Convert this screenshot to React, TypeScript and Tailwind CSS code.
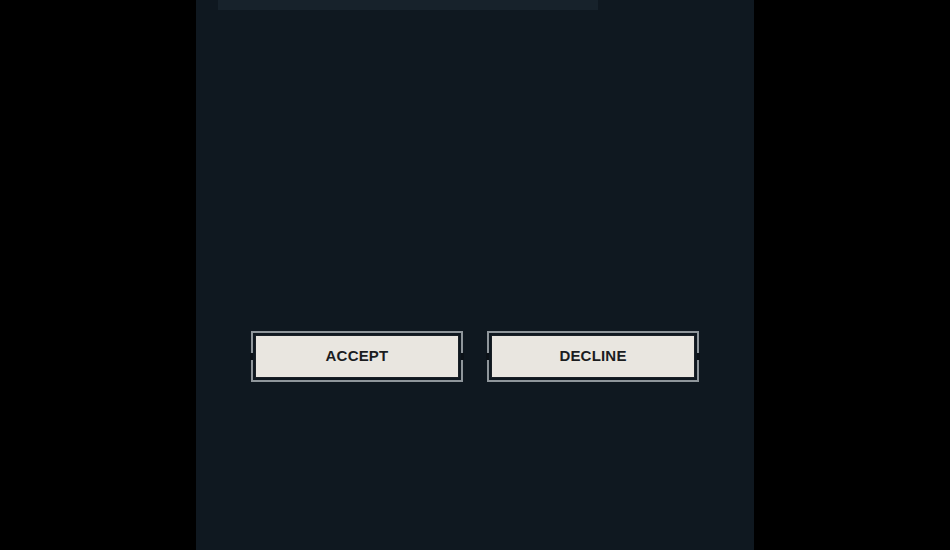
function FrameButton({ label }: { label: string }) {
  return (
    <button className="relative w-[212px] h-[51px] border-2 border-[#8f969b] bg-[#0f1820] p-[2px]">
      <span className="absolute left-[-3px] top-[20px] w-[3px] h-[7px] bg-[#0c1218]" />
      <span className="absolute right-[-3px] top-[20px] w-[3px] h-[7px] bg-[#0c1218]" />
      <span className="flex h-full w-full items-center justify-center border border-[#1a2026] bg-[#e9e6e0] text-[15px] font-bold tracking-[0.2px] text-[#1b1d1f] [font-family:'Liberation_Sans',Arial,sans-serif]">
        {label}
      </span>
    </button>
  );
}

export default function App() {
  return (
    <div className="flex h-[550px] w-[950px] justify-center bg-black">
      <div className="flex h-full w-[558px] flex-col bg-[#0f1820]">
        <div className="ml-[22px] h-[10px] w-[380px] bg-[#17222b]" />
        <div className="mt-[321px] flex justify-center gap-[24px]">
          <FrameButton label="ACCEPT" />
          <FrameButton label="DECLINE" />
        </div>
      </div>
    </div>
  );
}
